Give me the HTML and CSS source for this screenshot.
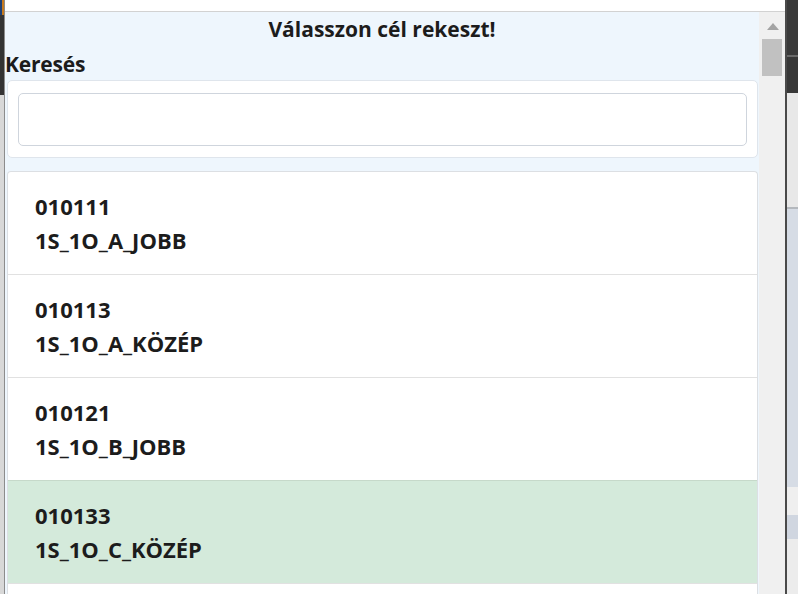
FILE: index.html
```html
<!DOCTYPE html>
<html lang="hu">
<head>
<meta charset="utf-8">
<title>Válasszon cél rekeszt!</title>
<link rel="stylesheet" href="styles.css">
</head>
<body>
  <div class="left-bg">
    <div class="lb-top"></div>
    <div class="lb-dark"></div>
    <div class="lb-light"></div>
  </div>
  <div class="window">
    <div class="top-strip"></div>
    <div class="popup">
      <div class="main">
        <div class="header">
          <div class="title">Válasszon cél rekeszt!</div>
          <div class="label">Keresés</div>
        </div>
        <div class="search-card">
          <input class="search-input" type="text">
        </div>
        <div class="list">
          <div class="item">
            <div class="code">010111</div>
            <div class="name">1S_1O_A_JOBB</div>
          </div>
          <div class="item">
            <div class="code">010113</div>
            <div class="name">1S_1O_A_KÖZÉP</div>
          </div>
          <div class="item">
            <div class="code">010121</div>
            <div class="name">1S_1O_B_JOBB</div>
          </div>
          <div class="item selected">
            <div class="code">010133</div>
            <div class="name">1S_1O_C_KÖZÉP</div>
          </div>
          <div class="list-rest"></div>
        </div>
      </div>
      <div class="scrollbar">
        <svg class="arrow" width="12" height="7" viewBox="0 0 12 7"><polygon points="0,7 12,7 6,0" fill="#a3a3a3"/></svg>
        <div class="thumb"></div>
      </div>
    </div>
  </div>
  <div class="right-bg">
    <div class="rb-dark1"></div>
    <div class="rb-line"></div>
    <div class="rb-dark2"></div>
    <div class="rb-light1"></div>
    <div class="rb-sep"></div>
    <div class="rb-blue1"></div>
    <div class="rb-light2"></div>
    <div class="rb-blue2"></div>
    <div class="rb-light3"></div>
  </div>
</body>
</html>
```

FILE: styles.css
```css
html, body {
  margin: 0;
  padding: 0;
}
body {
  width: 798px;
  height: 594px;
  overflow: hidden;
  display: flex;
  font-family: "Open Sans", "Noto Sans", "DejaVu Sans", sans-serif;
  color: #1c1c1c;
  background: #e6e6e6;
}

/* left background strip */
.left-bg {
  width: 4px;
  display: flex;
  flex-direction: column;
}
.lb-top {
  height: 15px;
  background: linear-gradient(to right, #1d3f74 0 2px, #c67a1e 2px 4px);
}
.lb-dark {
  height: 80px;
  background: #333;
}
.lb-light {
  flex: 1;
  background: #d8d8d8;
}

/* popup window */
.window {
  width: 780px;
  border-left: 1px solid #8c8c8c;
  border-right: 2px solid #4a4a4a;
  display: flex;
  flex-direction: column;
  background: #fff;
}
.top-strip {
  height: 11px;
  background: #fff;
  border-bottom: 1px solid #d2d2d2;
}
.popup {
  flex: 1;
  display: flex;
  min-height: 0;
}
.main {
  width: 754px;
  background: #eef6fd;
  display: flex;
  flex-direction: column;
  overflow: hidden;
}
.header {
  padding-top: 3px;
  padding-bottom: 2px;
}
.title {
  font-size: 21px;
  font-weight: 700;
  line-height: 28px;
  text-align: center;
  margin-bottom: 7px;
}
.label {
  font-size: 21px;
  font-weight: 700;
  line-height: 28px;
  letter-spacing: -0.2px;
}
.search-card {
  margin: 0 1px 0 2px;
  background: #fff;
  border: 1px solid #dfe5ec;
  border-radius: 5px;
  padding: 12px 10px 11px 10px;
}
.search-input {
  display: block;
  box-sizing: border-box;
  width: 100%;
  height: 53px;
  margin: 0;
  border: 1px solid #cfd5dd;
  border-radius: 5px;
  background: #fff;
  outline: none;
}
.list {
  flex: 1;
  margin: 13px 1px 0 2px;
  background: #fff;
  border: 1px solid #dcdfe3;
  border-bottom: none;
  border-radius: 4px 4px 0 0;
  display: flex;
  flex-direction: column;
}
.item {
  padding: 17px 27px;
  font-size: 22px;
  font-weight: 700;
  line-height: 34px;
  border-top: 1px solid #e1e1e1;
}
.item:first-child {
  border-top: none;
}
.item.selected {
  background: #d4eadb;
  border-top-color: #c6d9ca;
}
.list-rest {
  flex: 1;
  border-top: 1px solid #e1e1e1;
}

/* scrollbar */
.scrollbar {
  width: 26px;
  background: #f0f0f0;
  display: flex;
  flex-direction: column;
  align-items: center;
}
.arrow {
  margin-top: 11px;
  margin-left: 1px;
}
.thumb {
  margin-top: 9px;
  width: 20px;
  height: 37px;
  background: #c1c1c1;
}

/* right background strip */
.right-bg {
  width: 11px;
  display: flex;
  flex-direction: column;
}
.rb-dark1 { height: 55px; background: #3a3a3a; }
.rb-line { height: 2px; background: #6a6a6a; }
.rb-dark2 { height: 36px; background: #383838; }
.rb-light1 { height: 114px; background: #e8e8e8; }
.rb-sep { height: 2px; background: #b4b8bd; }
.rb-blue1 { height: 278px; background: #d6dce5; }
.rb-light2 { height: 28px; background: #efefef; }
.rb-blue2 { height: 24px; background: #d0d6e0; }
.rb-light3 { flex: 1; background: #ececec; }
```
